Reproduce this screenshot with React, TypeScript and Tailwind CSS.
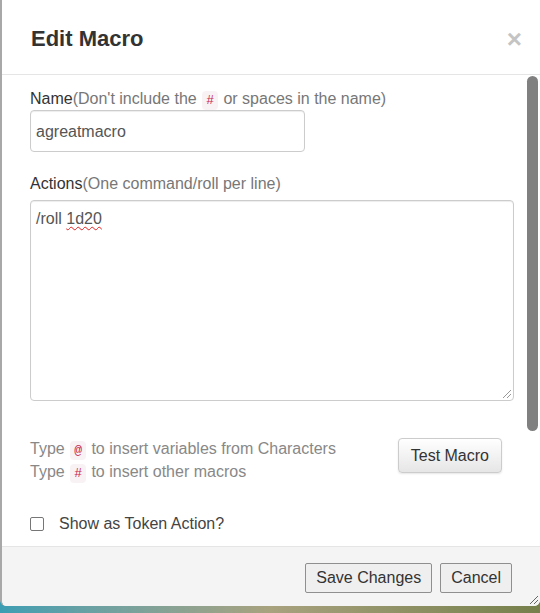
import React from "react";

const font = { fontFamily: '"Liberation Sans", Arial, sans-serif' };

function Code({ children }: { children: React.ReactNode }) {
  return (
    <code className="mx-[1px] rounded-[4px] bg-[#f9f2f4] px-[4px] py-[2px] font-['Liberation_Mono',monospace] text-[13px] leading-none text-[#c7254e]">
      {children}
    </code>
  );
}

function Grip({ className }: { className: string }) {
  return (
    <svg className={className} width="12" height="12" viewBox="0 0 12 12">
      <path d="M11 3 L3 11 M11 7 L7 11" stroke="currentColor" strokeWidth="1" />
    </svg>
  );
}

export default function App() {
  return (
    <div
      className="relative h-[613px] w-[540px] overflow-hidden bg-gradient-to-r from-[#3c9eb3] via-[#a8a27e] to-[#76804c]"
      style={font}
    >
      <div className="relative flex h-[606px] flex-col overflow-hidden rounded-b-[6px] border-l-2 border-[#a8a8a8] bg-white">
        {/* header */}
        <div className="flex h-[75px] shrink-0 items-center justify-between border-b border-[#e5e5e5] pl-[29px] pr-[18px]">
          <h4 className="mt-[3px] text-[22px] font-bold leading-none text-[#333]">Edit Macro</h4>
          <span className="mt-[3px] text-[26px] font-bold leading-none text-[#c4c4c4]">×</span>
        </div>

        {/* body */}
        <div className="flex min-h-0 flex-1">
          <div className="flex-1 pl-[28px] pt-[13px]">
            <div className="text-[16px] leading-[22px]">
              <span className="text-[#333]">Name</span>
              <span className="text-[#777]">
                (Don't include the <Code>#</Code> or spaces in the name)
              </span>
            </div>
            <div className="flex h-[42px] w-[275px] items-center rounded-[4px] border border-[#ccc] px-[5px] pt-[2px] text-[16px] text-[#555] shadow-[inset_0_1px_1px_rgba(0,0,0,0.075)]">
              agreatmacro
            </div>

            <div className="mt-[21px] text-[16px] leading-[22px]">
              <span className="text-[#333]">Actions</span>
              <span className="text-[#777]">(One command/roll per line)</span>
            </div>
            <div className="relative mt-[5px] h-[201px] w-[484px] rounded-[4px] border border-[#ccc] px-[5px] pt-[7px] text-[16px] leading-[22px] text-[#555] shadow-[inset_0_1px_1px_rgba(0,0,0,0.075)]">
              /roll{" "}
              <span className="underline decoration-[#e02020] decoration-wavy decoration-1 underline-offset-[2px]">1d20</span>
              <Grip className="absolute bottom-[1px] right-[1px] text-[#999]" />
            </div>

            <div className="mt-[36px] flex items-start justify-between pr-[12px]">
              <div className="text-[16px] leading-[23px] text-[#888]">
                <div>
                  Type <Code>@</Code> to insert variables from Characters
                </div>
                <div>
                  Type <Code>#</Code> to insert other macros
                </div>
              </div>
              <button className="mt-[1px] h-[35px] rounded-[4px] border border-[#ccc] bg-gradient-to-b from-white to-[#e6e6e6] px-[12px] text-[16px] text-[#333] shadow-[0_1px_2px_rgba(0,0,0,0.1)]">
                Test Macro
              </button>
            </div>

            <div className="mt-[30px] flex items-center text-[16px] leading-[22px] text-[#444]">
              <span className="h-[14px] w-[14px] rounded-[2px] border border-[#767676] bg-white" />
              <span className="ml-[15px]">Show as Token Action?</span>
            </div>
          </div>
          <div className="w-[27px] shrink-0 pl-[13px] pr-[3px]">
            <div className="mt-[1px] h-[355px] w-[11px] rounded-full bg-[#808080]" />
          </div>
        </div>

        {/* footer */}
        <div className="flex h-[60px] shrink-0 justify-end gap-[8px] border-t border-[#e5e5e5] bg-[#f4f4f4] pr-[28px] pt-[16px]">
          <button className="h-[30px] rounded-[2px] border border-[#8f8f8f] bg-[#efefef] px-[10px] text-[16px] text-[#333]">
            Save Changes
          </button>
          <button className="h-[30px] rounded-[2px] border border-[#8f8f8f] bg-[#efefef] px-[10px] text-[16px] text-[#333]">
            Cancel
          </button>
        </div>
        <Grip className="absolute bottom-[1px] right-[1px] text-[#666]" />
      </div>
    </div>
  );
}
